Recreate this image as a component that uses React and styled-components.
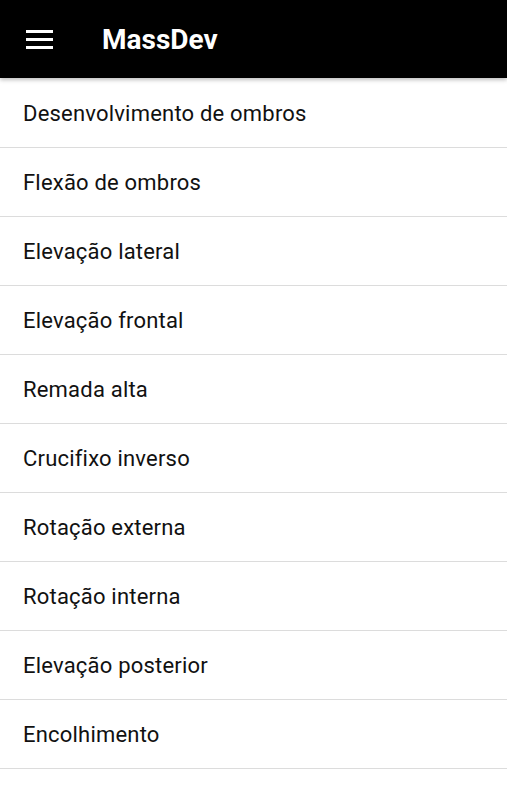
import React from "react";
import styled, { createGlobalStyle } from "styled-components";

const exercises = [
	"Desenvolvimento de ombros",
	"Flexão de ombros",
	"Elevação lateral",
	"Elevação frontal",
	"Remada alta",
	"Crucifixo inverso",
	"Rotação externa",
	"Rotação interna",
	"Elevação posterior",
	"Encolhimento",
];

export default function App() {
	return (
		<Page>
			<GlobalStyle />
			<Header>
				<MenuButton aria-label="menu">
					<span />
					<span />
					<span />
				</MenuButton>
				<Title>MassDev</Title>
			</Header>
			<List>
				{exercises.map((name) => (
					<Item key={name}>{name}</Item>
				))}
			</List>
		</Page>
	);
}

const GlobalStyle = createGlobalStyle`
	body {
		margin: 0;
		background: #ffffff;
		font-family: Roboto, "Liberation Sans", sans-serif;
	}
`;

const Page = styled.div`
	width: 100%;
	min-height: 800px;
	background: #ffffff;
`;

const Header = styled.header`
	position: relative;
	z-index: 1;
	height: 78px;
	display: flex;
	align-items: center;
	background: #000000;
	box-shadow: 0 2px 4px rgba(0, 0, 0, 0.25);
`;

const MenuButton = styled.button`
	width: 27px;
	height: 19px;
	margin-left: 26px;
	margin-right: 49px;
	padding: 0;
	border: none;
	background: none;
	display: flex;
	flex-direction: column;
	justify-content: space-between;

	span {
		display: block;
		height: 3px;
		background: #ffffff;
	}
`;

const Title = styled.h1`
	margin: 0;
	font-family: Roboto, "Liberation Sans", sans-serif;
	font-weight: 700;
	font-size: 28px;
	color: #ffffff;
`;

const List = styled.ul`
	list-style: none;
	margin: 0;
	padding: 1px 0 0;
`;

const Item = styled.li`
	height: 68px;
	display: flex;
	align-items: center;
	padding-left: 23px;
	border-bottom: 1px solid #dcdcdc;
	font-family: Roboto, "Liberation Sans", sans-serif;
	font-size: 22px;
	letter-spacing: 0.2px;
	color: #111111;
`;
